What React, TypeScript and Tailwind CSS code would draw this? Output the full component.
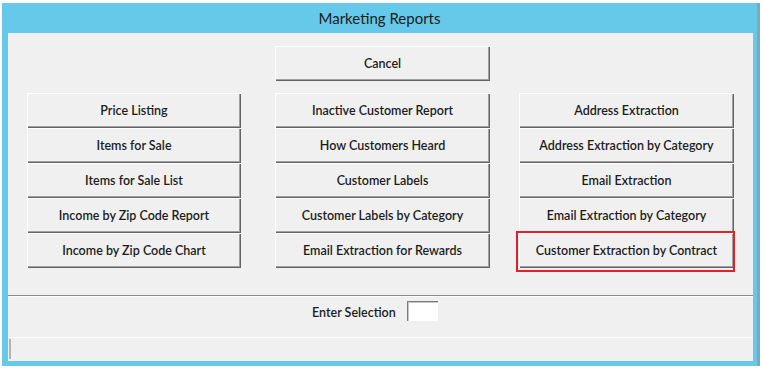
const col1 = ['Price Listing', 'Items for Sale', 'Items for Sale List', 'Income by Zip Code Report', 'Income by Zip Code Chart']
const col2 = ['Inactive Customer Report', 'How Customers Heard', 'Customer Labels', 'Customer Labels by Category', 'Email Extraction for Rewards']
const col3 = ['Address Extraction', 'Address Extraction by Category', 'Email Extraction', 'Email Extraction by Category', 'Customer Extraction by Contract']

function Btn({ label, marked }: { label: string; marked?: boolean }) {
  return (
    <div className="relative h-[35px] w-full">
      <button className="w-full h-full pt-[2px] bg-[#f0f0f0] text-[12.5px] font-semibold text-[#1c1c1c] shadow-[inset_1px_1px_0_#ffffff,inset_-1px_-1px_0_#646464,inset_-2px_-2px_0_#a0a0a0]">
        {label}
      </button>
      {marked && (
        <div className="absolute -top-[2px] -bottom-[4px] -left-[3px] -right-[1px] border-2 border-[#e3202a] pointer-events-none"></div>
      )}
    </div>
  )
}

export default function App() {
  return (
    <div className="w-[763px] h-[368px] bg-white overflow-hidden pt-[3px] pl-[2px] font-['Lato',sans-serif]">
      <div className="w-[758px] h-[363px] bg-[#67c9e9] border-r-[3px] border-[#7fa8b8] flex flex-col">
        {/* title bar */}
        <div className="h-[30px] flex items-center justify-center text-[15px] text-[#1b1b1b]">
          Marketing Reports
        </div>

        <div className="ml-[6px] mr-[4px] h-[328px] bg-[#f0f0f0] flex flex-col">
          <div className="pt-[13px] pl-[267px]">
            <div className="w-[215px]">
              <Btn label="Cancel" />
            </div>
          </div>

          <div className="mt-[12px] flex pl-[19px]">
            <div className="w-[214px] flex flex-col">
              {col1.map((l) => <Btn key={l} label={l} />)}
            </div>
            <div className="w-[215px] ml-[34px] flex flex-col">
              {col2.map((l) => <Btn key={l} label={l} />)}
            </div>
            <div className="w-[215px] ml-[29px] flex flex-col">
              {col3.map((l, i) => <Btn key={l} label={l} marked={i === 4} />)}
            </div>
          </div>

          {/* separator */}
          <div className="mt-[27px] h-px bg-[#8c8c8c]"></div>
          <div className="h-px bg-white"></div>

          <div className="h-[40px] flex items-start pl-[304px] pt-[4px]">
            <span className="text-[12.5px] font-semibold text-[#1c1c1c] leading-[20px] pt-[2px]">Enter Selection</span>
            <input className="ml-[11px] w-[31px] h-[20px] bg-white border-t border-l border-[#7a7a7a] shadow-[inset_1px_1px_0_#c8c8c8] outline-none" />
          </div>

          {/* status bar */}
          <div className="h-[24px] border-t border-white flex">
            <div className="ml-px mt-px h-[20px] w-[2px] bg-[#b4b4b4]"></div>
          </div>
        </div>
      </div>
    </div>
  )
}
